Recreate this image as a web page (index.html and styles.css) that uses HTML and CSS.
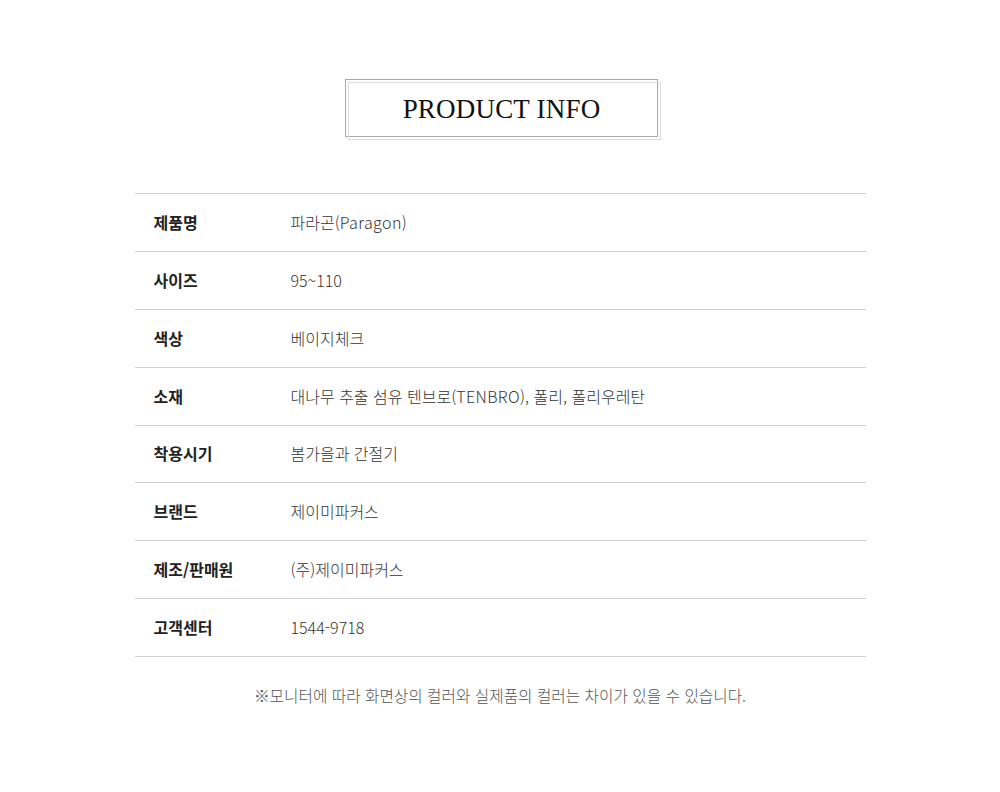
FILE: index.html
```html
<!DOCTYPE html>
<html lang="ko">
<head>
<meta charset="utf-8">
<link rel="stylesheet" href="styles.css">
</head>
<body>
<div class="page">
  <div class="title-wrap">
    <div class="title-box">PRODUCT INFO</div>
  </div>
  <div class="info">
    <div class="row"><div class="label">제품명</div><div class="value">파라곤(<span class="latin">Paragon</span>)</div></div>
    <div class="row"><div class="label">사이즈</div><div class="value">95~110</div></div>
    <div class="row"><div class="label">색상</div><div class="value">베이지체크</div></div>
    <div class="row"><div class="label">소재</div><div class="value">대나무 추출 섬유 텐브로(<span class="latin">TENBRO</span>), 폴리, 폴리우레탄</div></div>
    <div class="row short"><div class="label">착용시기</div><div class="value">봄가을과 간절기</div></div>
    <div class="row"><div class="label">브랜드</div><div class="value">제이미파커스</div></div>
    <div class="row"><div class="label">제조/판매원</div><div class="value">(주)제이미파커스</div></div>
    <div class="row"><div class="label">고객센터</div><div class="value">1544-9718</div></div>
  </div>
  <p class="note">※모니터에 따라 화면상의 컬러와 실제품의 컬러는 차이가 있을 수 있습니다.</p>
</div>
</body>
</html>
```
FILE: styles.css
```css
html, body {
  margin: 0;
  padding: 0;
  background: #fff;
}
.page {
  width: 1000px;
  padding-top: 79px;
  font-family: "Noto Sans CJK KR", "Noto Sans", sans-serif;
}
.title-wrap {
  display: flex;
  justify-content: center;
}
.title-box {
  position: relative;
  width: 311px;
  border: 1px solid #a8a8a8;
  margin-left: 3px;
  display: flex;
  align-items: center;
  justify-content: center;
  padding-top: 2px;
  box-sizing: content-box;
  height: 54px;
  font-family: "Liberation Serif", "DejaVu Serif", serif;
  font-size: 27px;
  color: #111;
  letter-spacing: 0.2px;
}
.title-box::after {
  content: "";
  position: absolute;
  left: 2px;
  top: 2px;
  right: -4px;
  bottom: -4px;
  border: 1px solid #dcdcdc;
  pointer-events: none;
}
.info {
  width: 731px;
  margin: 56px auto 0;
  border-top: 1px solid #cfcfcf;
}
.row {
  display: flex;
  align-items: center;
  box-sizing: border-box;
  height: 58px;
  padding-bottom: 2px;
  border-bottom: 1px solid #cfcfcf;
}
.row.short {
  height: 57px;
}
.label {
  width: 137px;
  padding-left: 19px;
  font-size: 16px;
  font-weight: 700;
  color: #222;
}
.value {
  font-size: 16px;
  font-weight: 300;
  color: #333;
}
.latin {
  letter-spacing: 0.4px;
}
.note {
  margin: 27px 0 0;
  text-align: center;
  font-size: 15.7px;
  font-weight: 300;
  color: #555;
}
```
